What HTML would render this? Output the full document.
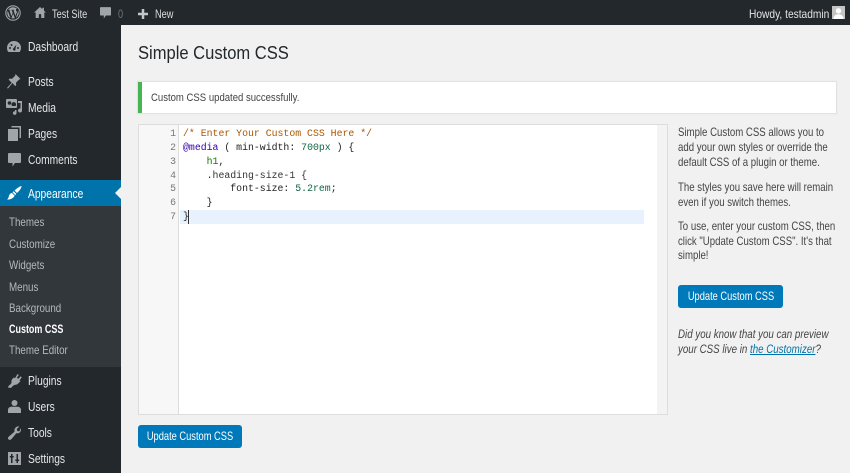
<!DOCTYPE html>
<html><head><meta charset="utf-8"><style>
html,body{margin:0;padding:0;width:850px;height:473px;overflow:hidden;background:#f1f1f1;font-family:"Liberation Sans",sans-serif;font-size:12.5px;color:#444}
.a{position:absolute;white-space:nowrap}
#bar{position:absolute;left:0;top:0;width:850px;height:25px;background:#23282d}
#side{position:absolute;left:0;top:25px;width:121px;height:448px;background:#23282d}
.m{position:absolute;left:28px;color:#e6e6e6;font-size:12.5px;line-height:16px;white-space:nowrap;transform:scaleX(.82);transform-origin:left}
.s{position:absolute;left:9px;color:#b4b9be;font-size:11.8px;line-height:14px;white-space:nowrap;transform:scaleX(.83);transform-origin:left}
.t{position:absolute;color:#ddd;font-size:11.8px;line-height:14px;white-space:nowrap;transform:scaleX(.78);transform-origin:left}
svg{position:absolute;display:block}
.i{fill:#a0a5aa}
.c{position:absolute;left:183px;font:9.85px/14px "Liberation Mono",monospace;white-space:pre;color:#222}
.n{position:absolute;width:36px;left:140px;text-align:right;font:9.85px/14px "Liberation Mono",monospace;color:#777}
.btn{position:absolute;background:#0079ba;border-radius:3px;height:23px}
.btn span{position:absolute;left:50%;top:0;color:#fff;font-size:12px;line-height:23px;white-space:nowrap;transform:translateX(-50%) scaleX(.775)}
.p{position:absolute;left:678px;font-size:11.6px;line-height:15.5px;color:#444;white-space:nowrap;transform:scaleX(.83);transform-origin:left}
</style></head><body>
<div id="bar"></div>
<div id="side"></div>
<div class="a" style="left:0;top:180px;width:121px;height:26px;background:#0073aa"></div>
<div class="a" style="left:0;top:206px;width:121px;height:161px;background:#32373c"></div>
<div class="a" style="top:187px;width:0;height:0;border:6px solid transparent;border-right-color:#f1f1f1;border-left:0;left:115px"></div>

<svg style="left:5px;top:5px" width="16" height="16" viewBox="0 0 16 16"><circle cx="8" cy="8" r="7.2" fill="none" stroke="#a0a5aa" stroke-width="1.1"/><path class="i" d="M2.3 8c0 2.3 1.300 4.200 3.200 5.100L2.800 5.700C2.500 6.400 2.300 7.200 2.300 8zM12 7.700c0-.7-.3-1.200-.5-1.600-.3-.5-.6-.9-.6-1.400 0-.5.4-1.100 1-1.100h.1C10.900 2.700 9.500 2.300 8 2.300c-2 0-3.800 1-4.800 2.600h.4c.6 0 1.500-.1 1.500-.1.300 0 .3.500 0 .5 0 0-.3 0-.6.100l1.900 5.800 1.200-3.500-.8-2.300c-.3 0-.5-.1-.5-.1-.3 0-.3-.5 0-.5 0 0 .9.100 1.400.1.600 0 1.500-.1 1.500-.1.300 0 .3.500 0 .5 0 0-.3 0-.6.100l1.900 5.700.5-1.800c.3-.8.500-1.300.5-1.800zM8.100 8.500l-1.600 4.700c.5.100 1 .2 1.500.2.600 0 1.200-.1 1.800-.3zM13 5.200c0 .2 0 .4 0 .7 0 .6-.1 1.200-.4 2l-1.700 4.800c1.700-1 2.800-2.800 2.800-4.800 0-1-.3-1.900-.7-2.700z"/></svg>
<svg style="left:34px;top:7px" width="12" height="11" viewBox="0 0 15 14"><path class="i" d="M7.500 0L0 7h2v7h4V9h3v5h4V7h2l-2.500-2.400V1h-2v1.700z"/></svg>
<div class="t" style="left:52px;top:7px">Test Site</div>
<svg style="left:100px;top:7px" width="11" height="12" viewBox="0 0 13 14"><path class="i" d="M1 0h11a1 1 0 0 1 1 1v8a1 1 0 0 1-1 1H7l-2.500 3.500V10H1a1 1 0 0 1-1-1V1a1 1 0 0 1 1-1z"/></svg>
<div class="t" style="left:118px;top:7px;color:#6f7478">0</div>
<svg style="left:138px;top:9px" width="10" height="10" viewBox="0 0 12 12"><path d="M4.500 0h3v4.500H12v3H7.500V12h-3V7.500H0v-3h4.500z" style="fill:#c4c7ca"/></svg>
<div class="t" style="left:155px;top:7px">New</div>
<div class="t" style="left:749px;top:7px;color:#e4e4e4;transform:scaleX(.865)">Howdy, testadmin</div>
<svg style="left:832px;top:6px" width="13" height="13" viewBox="0 0 13 13"><rect width="13" height="13" fill="#c4c4c4"/><circle cx="6.500" cy="4.800" r="2.700" fill="#fff"/><path fill="#fff" d="M1.500 13c0-3 2-4.800 5-4.800s5 1.800 5 4.800z"/></svg>

<svg style="left:7px;top:40px" width="14" height="13" viewBox="0 0 14 13"><path class="i" d="M7 1a7 7 0 0 0-7 7c0 1.500.5 3 1.300 4h11.400A7 7 0 0 0 14 8a7 7 0 0 0-7-7zM3 9a1 1 0 1 1 0-2 1 1 0 0 1 0 2zm1.500-3a1 1 0 1 1 0-2 1 1 0 0 1 0 2zM8 10.500a1.500 1.500 0 0 1-2-1.800L9.500 4.500 8.400 8.800c.3.600.2 1.300-.4 1.700zM11 9a1 1 0 1 1 0-2 1 1 0 0 1 0 2z"/></svg>
<div class="m" style="top:39px">Dashboard</div>
<svg style="left:7px;top:74px" width="14" height="15" viewBox="0 0 14 15"><path class="i" d="M8.500 0l5 5-1.500.6-3 3 .2 2.500-1 1L5.500 9 1 14.500 0 14l4.700-5.300L1.600 5.600l1-1 2.500.2 3-3z"/></svg>
<div class="m" style="top:74px">Posts</div>
<svg style="left:6px;top:99px" width="16" height="16" viewBox="0 0 16 16"><path class="i" d="M1 0h9a1 1 0 0 1 1 1v7a1 1 0 0 1-1 1H1a1 1 0 0 1-1-1V1a1 1 0 0 1 1-1zm2.500 2.200a1.800 1.800 0 1 0 0 3.600 1.800 1.800 0 0 0 0-3.600zM8 3a2.500 2.500 0 0 0-2 4h3.500a2.500 2.500 0 0 0-1.500-4zM12 2h4v9.500a2 2 0 1 1-1.500-1.900V4H12zM9 11h1.500v3a1.800 1.800 0 1 1-1.500-1.700z"/></svg>
<div class="m" style="top:100px">Media</div>
<svg style="left:8px;top:126px" width="13" height="15" viewBox="0 0 13 15"><path class="i" d="M3.500 0H13v12h-1.500V1.500h-8zM0 3h10v12H0z"/></svg>
<div class="m" style="top:126px">Pages</div>
<svg style="left:8px;top:153px" width="13" height="14" viewBox="0 0 13 14"><path class="i" d="M1 0h11a1 1 0 0 1 1 1v8a1 1 0 0 1-1 1H7l-2.500 3.500V10H1a1 1 0 0 1-1-1V1a1 1 0 0 1 1-1z"/></svg>
<div class="m" style="top:152px">Comments</div>
<svg style="left:7px;top:186px" width="15" height="14" viewBox="0 0 15 14"><path fill="#fff" d="M14.500 0c.4 1-1.500 4.500-4.500 7L7.500 4.500C10 2 13.500 0 14.500 0zM6.700 5.300l2.600 2.600-1 1.200-2.800-2.800zM5 7l2.700 2.700C6.300 12 3 14 0 13.500c1-.7 1.500-1.500 1.800-3C2.200 8.500 3.500 7 5 7z"/></svg>
<div class="m" style="top:186px;color:#fff">Appearance</div>

<div class="s" style="top:215px">Themes</div>
<div class="s" style="top:237px">Customize</div>
<div class="s" style="top:258px">Widgets</div>
<div class="s" style="top:280px">Menus</div>
<div class="s" style="top:301px">Background</div>
<div class="s" style="top:322px;color:#fff;font-weight:bold;transform:scaleX(.76)">Custom CSS</div>
<div class="s" style="top:343px">Theme Editor</div>

<svg style="left:8px;top:374px" width="14" height="14" viewBox="0 0 14 14"><path class="i" d="M9.500 0l1.300 1L8.800 3.700l1.500 1.200 2.200-2.500 1.300 1-2.300 3 1 .8-1 .9c-1 1.200-2.700 3-4.700 2.700L4.500 12.300 3 14 0 13.500l.5-1.500 1.800-1.500 1.300-1.700c-.7-1.800.3-3.500 1.500-4.500L6 3.400l1 .8z"/></svg>
<div class="m" style="top:373px">Plugins</div>
<svg style="left:8px;top:400px" width="13" height="13" viewBox="0 0 13 13"><circle class="i" cx="6.500" cy="3" r="3"/><path class="i" d="M0 13v-3c0-2 1.500-3.200 3.500-3.200h6C11.500 6.800 13 8 13 10v3z"/></svg>
<div class="m" style="top:399px">Users</div>
<svg style="left:8px;top:426px" width="13" height="14" viewBox="0 0 13 14"><path class="i" d="M12.700 2.300c.7 2 0 4-2 4.800-.8.300-1.600.2-2.300 0L3.500 13c-.8 1-2.200 1.200-3 .4-.8-.8-.6-2 .3-2.800l5.800-5c-.3-.8-.3-1.700 0-2.500C7.500.9 9.500 0 11.300.5L8.800 3l.5 2 2 .4z"/></svg>
<div class="m" style="top:425px">Tools</div>
<svg style="left:8px;top:452px" width="13" height="13" viewBox="0 0 13 13"><path class="i" fill-rule="evenodd" d="M0 0h13v13H0zM3 2v2H1.800v1.500H3V11h1.500V5.500h1.200V4H4.500V2zM8.500 2v5.500H7.300V9h1.200v2H10V9h1.200V7.500H10V2z"/></svg>
<div class="m" style="top:451px">Settings</div>

<div class="a" style="left:138px;top:41px;font-size:18.6px;line-height:24px;color:#23282d;transform:scaleX(.89);transform-origin:left">Simple Custom CSS</div>

<div class="a" style="left:138px;top:82px;width:698px;height:31px;background:#fff;border-left:4px solid #46b450;box-sizing:border-box;box-shadow:0 0 1px 1px rgba(0,0,0,.08)"></div>
<div class="a" style="left:151px;top:91px;font-size:11.3px;line-height:14px;color:#444;transform:scaleX(.845);transform-origin:left">Custom CSS updated successfully.</div>

<div class="a" style="left:138px;top:124px;width:530px;height:291px;background:#fff;border:1px solid #ddd;box-sizing:border-box"></div>
<div class="a" style="left:139px;top:125px;width:40px;height:289px;background:#f7f7f7;border-right:1px solid #ddd;box-sizing:border-box"></div>
<div class="a" style="left:657px;top:125px;width:10px;height:289px;background:#f3f3f3"></div>
<div class="a" style="left:180px;top:210px;width:464px;height:14px;background:#e8f2fe"></div>
<div class="a" style="left:188px;top:210px;width:1px;height:14px;background:#333"></div>

<div class="n" style="top:127px">1</div>
<div class="n" style="top:141px">2</div>
<div class="n" style="top:155px">3</div>
<div class="n" style="top:169px">4</div>
<div class="n" style="top:182px">5</div>
<div class="n" style="top:196px">6</div>
<div class="n" style="top:210px">7</div>

<div class="c" style="top:127px;color:#a50">/* Enter Your Custom CSS Here */</div>
<div class="c" style="top:141px"><span style="color:#30a">@media</span> ( min-width: <span style="color:#164">700px</span> ) {</div>
<div class="c" style="top:155px">    <span style="color:#170">h1</span>,</div>
<div class="c" style="top:169px;color:#333">    .heading-size-1 {</div>
<div class="c" style="top:182px">        font-size: <span style="color:#164">5.2rem</span>;</div>
<div class="c" style="top:196px">    }</div>
<div class="c" style="top:210px">}</div>

<div class="p" style="top:125px">Simple Custom CSS allows you to</div>
<div class="p" style="top:140px">add your own styles or override the</div>
<div class="p" style="top:155px">default CSS of a plugin or theme.</div>
<div class="p" style="top:180px">The styles you save here will remain</div>
<div class="p" style="top:195px">even if you switch themes.</div>
<div class="p" style="top:219px">To use, enter your custom CSS, then</div>
<div class="p" style="top:234px">click "Update Custom CSS". It's that</div>
<div class="p" style="top:248px">simple!</div>

<div class="btn" style="left:678px;top:285px;width:105px"><span>Update Custom CSS</span></div>

<div class="p" style="top:327px;font-style:italic;transform:scaleX(.84)">Did you know that you can preview</div>
<div class="p" style="top:342px;font-style:italic;transform:scaleX(.84)">your CSS live in <span style="color:#0073aa;text-decoration:underline">the Customizer</span>?</div>

<div class="btn" style="left:138px;top:425px;width:104px"><span>Update Custom CSS</span></div>
</body></html>
